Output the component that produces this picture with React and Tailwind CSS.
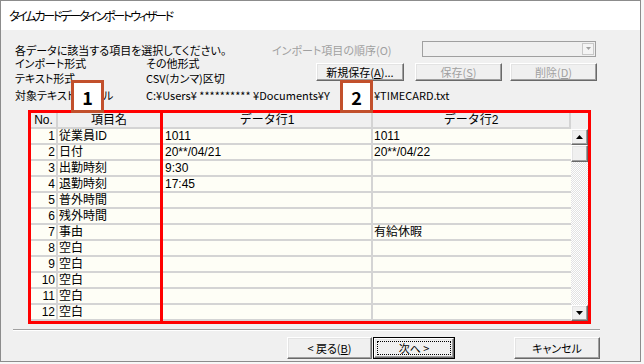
import React from "react";

const rows = [
  [1, "従業員ID", "1011", "1011"],
  [2, "日付", "20**/04/21", "20**/04/22"],
  [3, "出勤時刻", "9:30", ""],
  [4, "退勤時刻", "17:45", ""],
  [5, "普外時間", "", ""],
  [6, "残外時間", "", ""],
  [7, "事由", "", "有給休暇"],
  [8, "空白", "", ""],
  [9, "空白", "", ""],
  [10, "空白", "", ""],
  [11, "空白", "", ""],
  [12, "空白", "", ""],
];

const raised =
  "border border-t-white border-l-white border-r-[#696969] border-b-[#696969] shadow-[inset_-1px_-1px_0_#a0a0a0,inset_1px_1px_0_#e3e3e3] bg-[#f0f0f0]";

const Btn = ({ w, disabled, children }) => (
  <div
    className={`${raised} ${w} h-full flex items-center justify-center ${
      disabled ? "text-[#a0a0a0]" : "text-black"
    }`}
  >
    {children}
  </div>
);

const Arrow = ({ down }) => (
  <div className={`${raised} h-[16px] w-full flex items-center justify-center`}>
    <svg width="7" height="4" viewBox="0 0 7 4">
      {down ? <polygon points="0,0 7,0 3.5,4" fill="#000" /> : <polygon points="0,4 7,4 3.5,0" fill="#000" />}
    </svg>
  </div>
);

const Badge = ({ n, className }) => (
  <div
    className={`absolute ${className} w-[33px] h-[33px] bg-white border-[3px] border-[#c2502c] flex items-center justify-center text-[18px] font-bold text-black`}
  >
    {n}
  </div>
);

export default function App() {
  return (
    <div className="w-[644px] h-[364px] bg-[#f7f7f7] relative font-['Noto_Sans_CJK_JP',sans-serif] [font-feature-settings:'palt'] text-[11px] leading-none text-black">
      <div className="w-[641px] h-[362px] border border-[#8c8c8c] flex flex-col bg-[#f0f0f0]">
        {/* title */}
        <div className="h-[29px] bg-white flex items-center pl-[8px] shrink-0 text-[12px] tracking-[-2.2px]">
          タイムカードデータインポートウィザード
        </div>

        <div className="flex flex-col pl-[14px]">
          {/* row 1 */}
          <div className="flex items-center h-[13px] mt-[14px]">
            <span className="w-[257px]">各データに該当する項目を選択してください。</span>
            <span className="w-[150px] text-[#a0a0a0]">インポート項目の順序(O)</span>
            <div className="w-[174px] h-[16px] mb-[4px] border border-[#a0a0a0] bg-[#f0f0f0] flex justify-end items-center pr-[1px]">
              <div className="w-[12px] h-[12px] border border-[#c8c8c8] bg-[#f4f4f4] flex items-center justify-center">
                <svg width="5" height="3" viewBox="0 0 5 3">
                  <polygon points="0,0 5,0 2.5,3" fill="#a0a0a0" />
                </svg>
              </div>
            </div>
          </div>

          {/* rows 2-3 + buttons */}
          <div className="flex">
            <div className="w-[301px] flex flex-col">
              <div className="flex items-center h-[13px]">
                <span className="w-[131px]">インポート形式</span>
                <span>その他形式</span>
              </div>
              <div className="flex items-center h-[17px]">
                <span className="w-[131px]">テキスト形式</span>
                <span>CSV(カンマ)区切</span>
              </div>
            </div>
            <div className="flex h-[18px] mt-[6px]">
              <Btn w="w-[88px]">
                新規保存(<span className="underline">A</span>)...
              </Btn>
              <div className="ml-[11px] h-full">
                <Btn w="w-[87px]" disabled>
                  保存(<span className="underline">S</span>)
                </Btn>
              </div>
              <div className="ml-[8px] h-full">
                <Btn w="w-[87px]" disabled>
                  削除(<span className="underline">D</span>)
                </Btn>
              </div>
            </div>
          </div>

          {/* row 4 */}
          <div className="flex items-center h-[17px] whitespace-nowrap">
            <span className="w-[131px]">対象テキストファイル</span>
            <span className="w-[228px]">C:¥Users¥ ********** ¥Documents¥Y</span>
            <span>¥TIMECARD.txt</span>
          </div>

          {/* grid */}
          <div className="ml-[13px] mt-[6px] w-[563px] h-[214px] border-[3px] border-[#ff0000] flex font-['Liberation_Sans','Noto_Sans_CJK_JP',sans-serif] [font-feature-settings:normal] text-[12px] relative">
            <div className="w-[540px] flex flex-col">
              <div className="flex h-[16px] bg-[#f0f0f0] border-b-2 border-[#d4d4d4] shrink-0">
                <div className="w-[27px] border-r-2 border-[#d4d4d4] flex items-center justify-center">No.</div>
                <div className="w-[102px] flex items-center justify-center">項目名</div>
                <div className="w-[3px]" />
                <div className="w-[210px] border-r-2 border-[#d4d4d4] flex items-center justify-center">データ行1</div>
                <div className="w-[198px] border-r-2 border-[#d4d4d4] flex items-center justify-center">データ行2</div>
              </div>
              {rows.map(([n, name, d1, d2]) => (
                <div key={n} className="flex h-[16px] bg-[#fefef6] border-b-2 border-[#d4d4d4] shrink-0">
                  <div className="w-[27px] border-r-2 border-[#d4d4d4] flex items-center justify-end pr-[1px]">{n}</div>
                  <div className="w-[102px] flex items-center pl-[1px]">{name}</div>
                  <div className="w-[3px]" />
                  <div className="w-[210px] border-r-2 border-[#d4d4d4] flex items-center pl-[2px]">{d1}</div>
                  <div className="w-[198px] flex items-center pl-[1px]">{d2}</div>
                </div>
              ))}
            </div>
            {/* scrollbar */}
            <div className="w-[17px] flex flex-col">
              <div className="h-[16px] bg-[#f0f0f0] shrink-0" />
              <div className="h-[16px] shrink-0">
                <Arrow />
              </div>
              <div className={`${raised} h-[17px] shrink-0`} />
              <div className="flex-1 bg-[repeating-conic-gradient(#ffffff_0_25%,#e2e2e2_0_50%)] bg-[length:2px_2px]" />
              <div className="h-[16px] shrink-0">
                <Arrow down />
              </div>
            </div>
            <div className="absolute left-[129px] top-0 bottom-0 w-[3px] bg-[#ff0000]" />
          </div>

          {/* separator */}
          <div className="ml-[-2px] mt-[5px] w-[587px] border-t border-t-[#a0a0a0] border-b border-b-white" />

          {/* bottom buttons */}
          <div className="flex h-[22px] mt-[6px] ml-[272px]">
            <Btn w="w-[85px]">
              &lt; 戻る(<span className="underline">B</span>)
            </Btn>
            <div className="ml-[1px] w-[82px] h-full border border-black">
              <div className={`${raised} h-full w-full p-[2px]`}>
                <div className="h-full w-full border border-dotted border-black flex items-center justify-center">
                  次へ &gt;
                </div>
              </div>
            </div>
            <div className="ml-[59px] h-full">
              <Btn w="w-[86px]">キャンセル</Btn>
            </div>
          </div>
        </div>
      </div>

      <Badge n="1" className="left-[71px] top-[80px]" />
      <Badge n="2" className="left-[340px] top-[80px]" />
    </div>
  );
}
